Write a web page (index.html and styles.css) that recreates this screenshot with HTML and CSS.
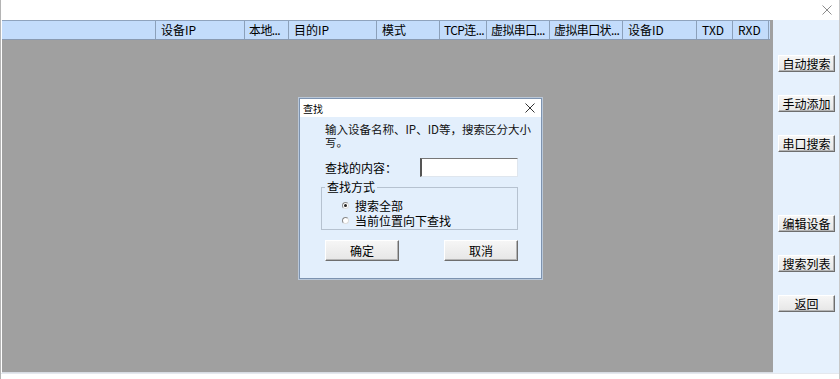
FILE: index.html
```html
<!DOCTYPE html>
<html lang="zh-CN">

<head>
    <meta charset="UTF-8">
    <meta name="viewport" content="width=device-width, initial-scale=1.0">
    <title>设备列表</title>
    <link rel="stylesheet" href="styles.css">
</head>

<body>
    <div class="window">
        <div class="titlebar">
            <svg class="close" width="10" height="10" viewBox="0 0 10 10">
                <path d="M0.5 0.5 L9.5 9.5 M9.5 0.5 L0.5 9.5" stroke="#8c8c8c" stroke-width="1" fill="none" />
            </svg>
        </div>
        <div class="main">
            <div class="grid">
                <div class="grid_head">
                    <span class="col" style="width:154px"></span>
                    <span class="col" style="width:89px">设备IP</span>
                    <span class="col tight" style="width:44px">本地...</span>
                    <span class="col" style="width:88px">目的IP</span>
                    <span class="col" style="width:63px">模式</span>
                    <span class="col tight" style="width:47px">TCP连...</span>
                    <span class="col tight" style="width:63px">虚拟串口...</span>
                    <span class="col tight" style="width:73px">虚拟串口状...</span>
                    <span class="col" style="width:74px">设备ID</span>
                    <span class="col" style="width:36px">TXD</span>
                    <span class="col" style="width:36px">RXD</span>
                </div>
                <div class="grid_body"></div>
            </div>
            <div class="side">
                <div class="side_group">
                    <button class="btn side_btn">自动搜索</button>
                    <button class="btn side_btn">手动添加</button>
                    <button class="btn side_btn">串口搜索</button>
                </div>
                <div class="side_group">
                    <button class="btn side_btn">编辑设备</button>
                    <button class="btn side_btn">搜索列表</button>
                    <button class="btn side_btn">返回</button>
                </div>
            </div>
        </div>
        <div class="statusbar"></div>

        <div class="dialog">
            <div class="dialog_title">
                <span>查找</span>
                <svg width="10" height="10" viewBox="0 0 10 10">
                    <path d="M0.5 0.5 L9.5 9.5 M9.5 0.5 L0.5 9.5" stroke="#333" stroke-width="1" fill="none" />
                </svg>
            </div>
            <div class="dialog_body">
                <p class="hint">输入设备名称、IP、ID等，搜索区分大小<br>写。</p>
                <div class="find_row">
                    <span class="find_label">查找的内容：</span>
                    <input class="find_input" type="text">
                </div>
                <fieldset class="mode_box">
                    <legend>查找方式</legend>
                    <label class="radio"><span class="dot checked"></span>搜索全部</label>
                    <label class="radio"><span class="dot"></span>当前位置向下查找</label>
                </fieldset>
                <div class="dialog_btns">
                    <button class="btn dlg_btn">确定</button>
                    <button class="btn dlg_btn">取消</button>
                </div>
            </div>
        </div>
    </div>
</body>

</html>
```

FILE: styles.css
```css
* {
    box-sizing: border-box;
}

body {
    margin: 0;
    font-family: "Noto Sans CJK SC", "Liberation Sans", sans-serif;
    font-size: 12px;
    color: #000;
}

.window {
    position: relative;
    width: 840px;
    height: 379px;
    background: #fff;
    border-left: 1px solid #b4b4b4;
    border-right: 1px solid #c8c8c8;
    overflow: hidden;
}

.titlebar {
    height: 20px;
    display: flex;
    justify-content: flex-end;
    align-items: center;
    padding-right: 7px;
}

.main {
    display: flex;
    height: 353px;
}

.grid {
    width: 771px;
    margin-left: 1px;
    background: #a0a0a0;
    display: flex;
    flex-direction: column;
    border-bottom: 1px solid #d8dde4;
}

.grid_head {
    display: flex;
    height: 20px;
    width: 768px;
    background: #c3dcfb;
    border-top: 1px solid #8fa3bd;
    border-bottom: 1px solid #8a9ab0;
}

.col {
    height: 18px;
    line-height: 18px;
    padding-left: 5px;
    border-right: 1px solid #8ba0ba;
    white-space: nowrap;
    overflow: hidden;
}

.col.tight {
    padding-left: 4px;
    letter-spacing: -0.6px;
}

.grid_body {
    flex: 1;
}

.side {
    flex: 1;
    background: #e6f1fd;
    padding: 35px 0 0 5px;
    display: flex;
    flex-direction: column;
    gap: 63px;
}

.side_group {
    display: flex;
    flex-direction: column;
    gap: 23px;
}

.btn {
    font-family: "Noto Sans CJK SC", "Liberation Sans", sans-serif;
    font-size: 12px;
    padding: 0;
    background: linear-gradient(#f6f6f6, #e6e6e6);
    border: 1px solid #fff;
    border-right-color: #6e6e6e;
    border-bottom-color: #6e6e6e;
    box-shadow: inset -1px -1px 0 #b4b4b4;
    color: #000;
}

.side_btn {
    width: 57px;
    height: 17px;
    line-height: 14px;
}

.statusbar {
    height: 6px;
    background: #fff;
    border-top: 1px solid #e4e8ee;
}

.dialog {
    position: absolute;
    left: 298px;
    top: 98px;
    width: 243px;
    height: 181px;
    background: #e3effc;
    border: 1px solid #7d93b0;
    box-shadow: 0 0 0 1px #b9c7d8;
}

.dialog_title {
    height: 18px;
    background: #fff;
    display: flex;
    justify-content: space-between;
    align-items: center;
    padding: 0 6px 0 3px;
    font-size: 10px;
}

.dialog_body {
    padding: 6px 0 0 25px;
}

.hint {
    margin: 0;
    white-space: nowrap;
    font-size: 11.5px;
    line-height: 13px;
    color: #111;
}

.find_row {
    display: flex;
    align-items: center;
    margin-top: 9px;
    height: 18px;
}

.find_label {
    width: 95px;
}

.find_input {
    width: 98px;
    height: 19px;
    background: #fff;
    border: 1px solid #dfe6ee;
    border-left: 2px solid #555;
    border-top: 1px solid #777;
    padding: 0;
}

.mode_box {
    margin: 5px 0 0 -4px;
    width: 197px;
    height: 49px;
    border: 1px solid #b6c2d0;
    padding: 5px 0 0 20px;
}

.mode_box legend {
    padding: 0 2px;
    margin-left: -17px;
    line-height: 12px;
}

.radio {
    display: flex;
    align-items: center;
    height: 15px;
    line-height: 15px;
}

.dot {
    width: 7px;
    height: 7px;
    border-radius: 50%;
    border: 1px solid #888;
    border-right-color: #ddd;
    border-bottom-color: #ddd;
    background: #fff;
    margin-right: 6px;
    display: flex;
    align-items: center;
    justify-content: center;
}

.dot.checked::after {
    content: "";
    width: 3px;
    height: 3px;
    border-radius: 50%;
    background: #222;
}

.dialog_btns {
    display: flex;
    gap: 45px;
    margin-top: 10px;
}

.dlg_btn {
    width: 74px;
    height: 21px;
}
```
